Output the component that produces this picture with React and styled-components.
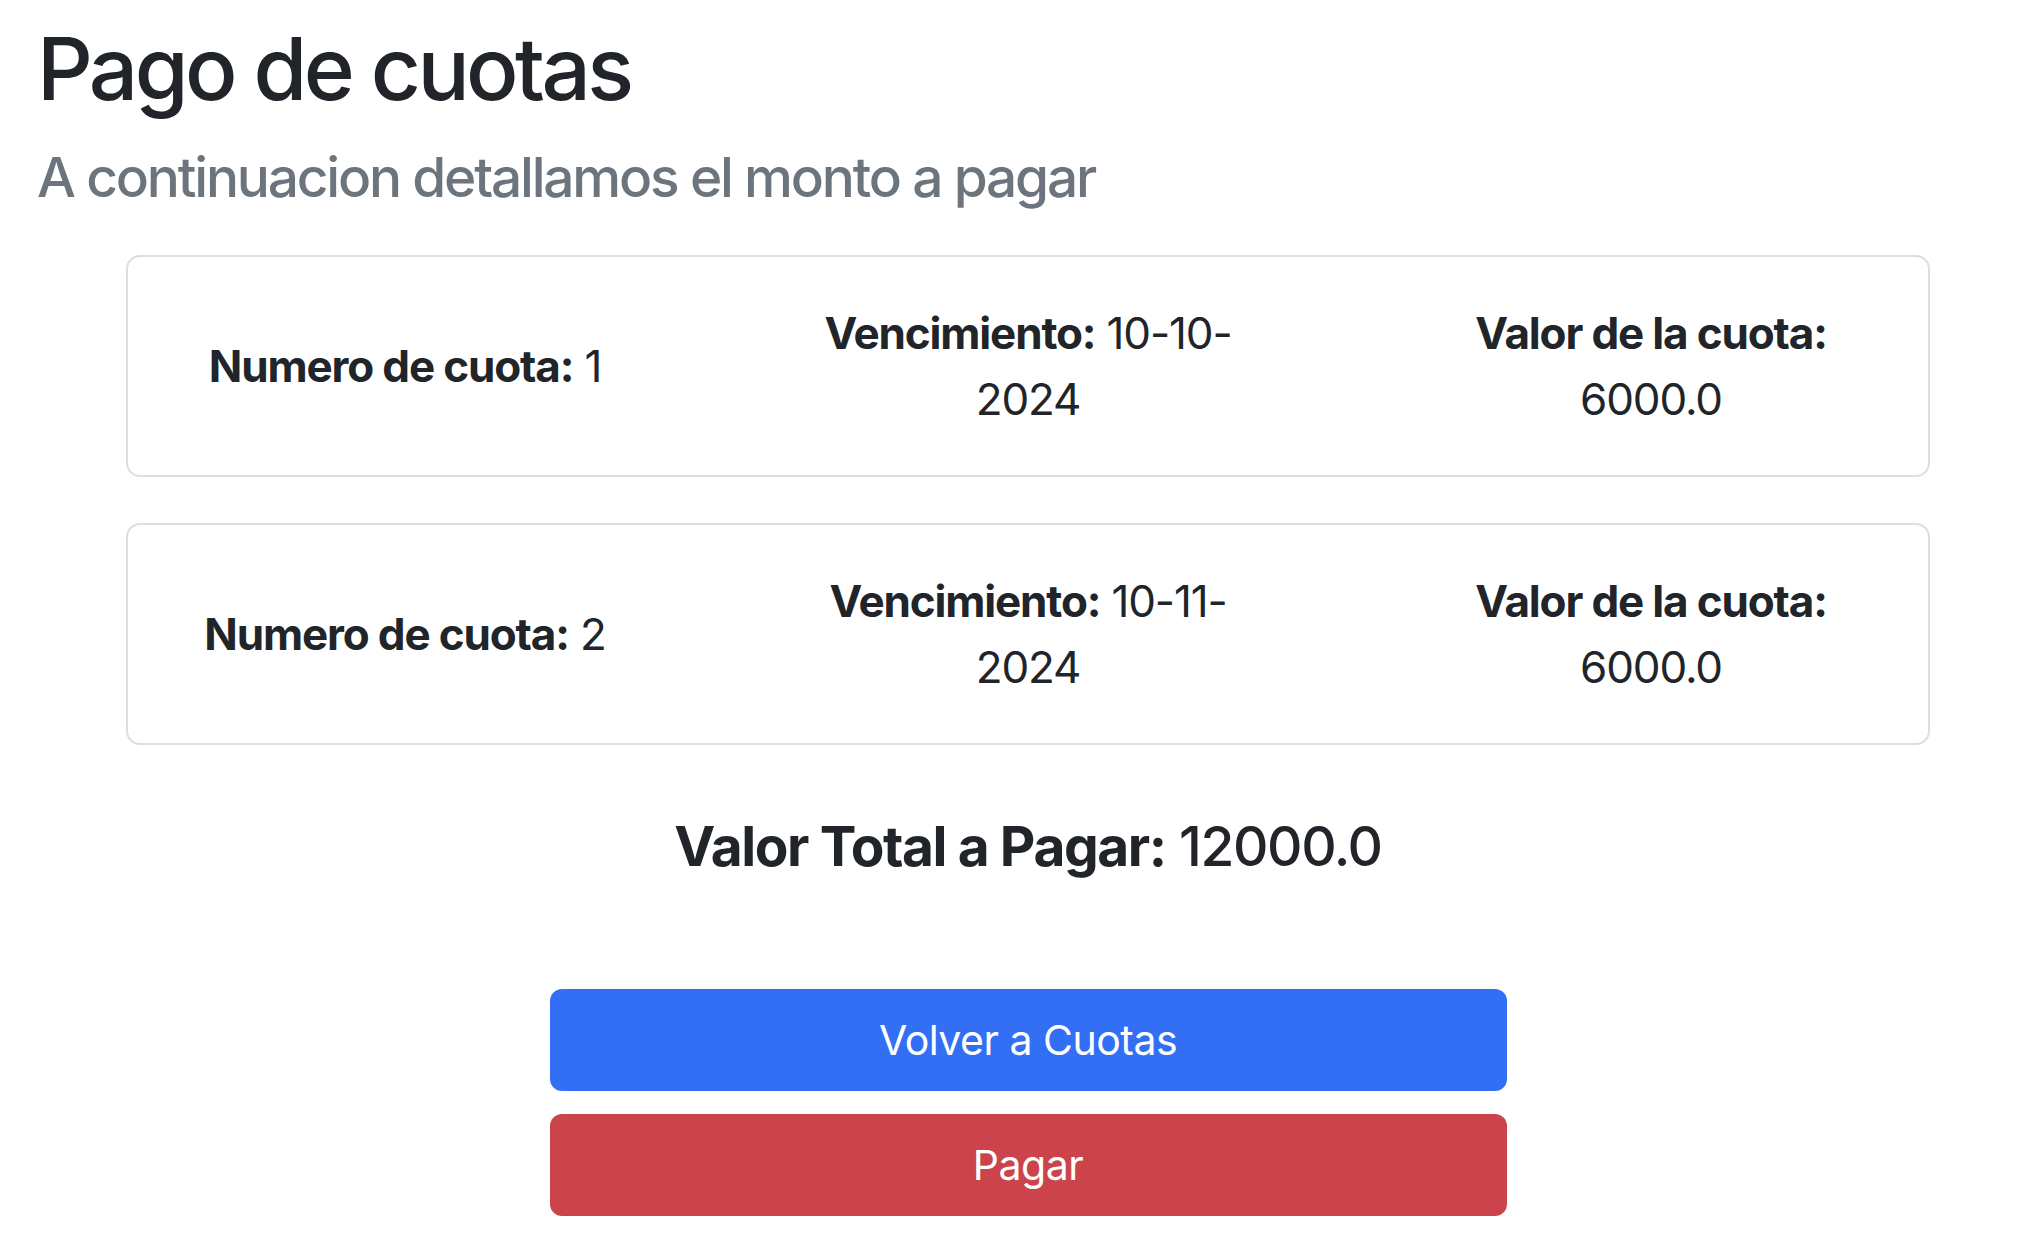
import React from 'react'
import styled, { createGlobalStyle } from 'styled-components'

const GlobalStyle = createGlobalStyle`
  * { box-sizing: border-box; }
  body {
    margin: 0;
    background: #ffffff;
    color: #212529;
    font-family: Inter, "Noto Sans", "Liberation Sans", sans-serif;
  }
`

const Page = styled.main`
  padding: 17px 0 40px 37px;
`

const Title = styled.h1`
  margin: 0;
  font-size: 87px;
  font-weight: 500;
  line-height: 1.2;
  letter-spacing: -3.6px;
`

const Subtitle = styled.h2`
  margin: 23px 0 0;
  font-size: 55px;
  font-weight: 500;
  line-height: 1.2;
  color: #6c757d;
  letter-spacing: -2.2px;
`

const Content = styled.section`
  width: 1804px;
  margin: 45px 0 0 89px;
  display: flex;
  flex-direction: column;
  align-items: center;
`

const CardList = styled.div`
  width: 100%;
  display: flex;
  flex-direction: column;
  gap: 46px;
`

const Card = styled.div`
  min-height: 222px;
  border: 2px solid #dedede;
  border-radius: 14px;
  padding: 43px 57px;
  display: flex;
  justify-content: space-between;
  align-items: center;
`

const Col = styled.div`
  width: 440px;
  text-align: center;
  font-size: 44px;
  line-height: 66px;
  letter-spacing: -1.15px;
`

const Label = styled.strong`
  font-weight: 700;
`

const Total = styled.h4`
  margin: 68px 0 0;
  font-size: 55px;
  font-weight: 500;
  line-height: 1.2;
  letter-spacing: -1.4px;
`

const Actions = styled.div`
  width: 957px;
  margin-top: 110px;
  display: flex;
  flex-direction: column;
  gap: 23px;
`

const Button = styled.button`
  height: 102px;
  border: none;
  border-radius: 12px;
  background: ${p => p.$color};
  color: #ffffff;
  font-family: inherit;
  font-size: 41px;
  font-weight: 400;
  letter-spacing: -0.5px;
  cursor: pointer;
`

const cuotas = [
  { numero: 1, vencimiento: '10-10-2024', valor: '6000.0' },
  { numero: 2, vencimiento: '10-11-2024', valor: '6000.0' },
]

const App = () => {
  return (
    <>
      <GlobalStyle />
      <Page>
        <Title>Pago de cuotas</Title>
        <Subtitle>A continuacion detallamos el monto a pagar</Subtitle>
        <Content>
          <CardList>
            {cuotas.map(c => (
              <Card key={c.numero}>
                <Col><Label>Numero de cuota:</Label> {c.numero}</Col>
                <Col><Label>Vencimiento:</Label> {c.vencimiento}</Col>
                <Col><Label>Valor de la cuota:</Label> {c.valor}</Col>
              </Card>
            ))}
          </CardList>
          <Total><Label>Valor Total a Pagar:</Label> 12000.0</Total>
          <Actions>
            <Button $color="#336ff5">Volver a Cuotas</Button>
            <Button $color="#cb444b">Pagar</Button>
          </Actions>
        </Content>
      </Page>
    </>
  )
}

export default App
